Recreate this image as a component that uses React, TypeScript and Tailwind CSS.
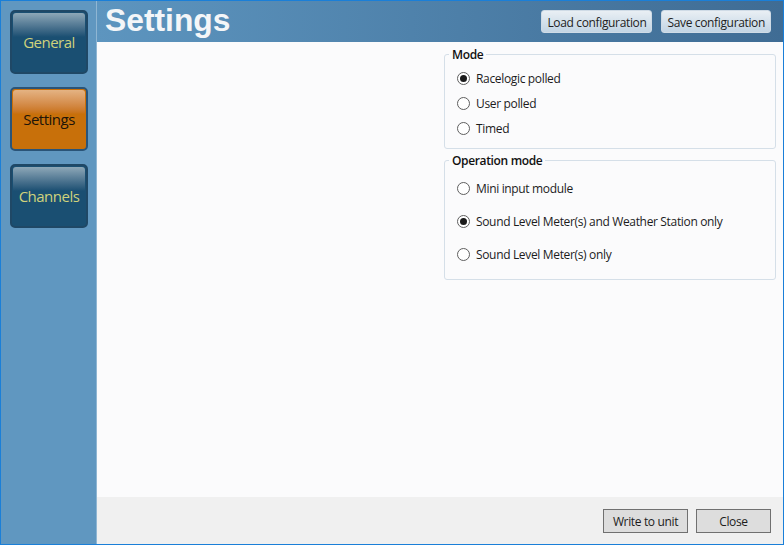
const font = "font-['Open_Sans','Noto_Sans',sans-serif]";

function NavButton({ label, active }: { label: string; active?: boolean }) {
  return (
    <div
      className={
        active
          ? "w-[78px] h-[64px] rounded-[5px] border-2 border-[#2a5478] bg-[#c8700a] p-px"
          : "w-[78px] h-[64px] rounded-[5px] border-2 border-[#1f4866] bg-[#1a4f72] p-px"
      }
    >
      <div className="relative h-full w-full">
        <div
          className={
            active
              ? "h-[24px] rounded-t-[3px] bg-gradient-to-b from-[#e4b383] to-[#c8700a]"
              : "h-[24px] rounded-t-[3px] bg-gradient-to-b from-[#8ea8b8] to-[#1a4f72]"
          }
        />
        <div
          className={
            active
              ? "absolute inset-0 flex items-center justify-center text-[15px] tracking-[-0.5px] text-[#1d1408]"
              : "absolute inset-0 flex items-center justify-center text-[15px] tracking-[-0.5px] text-[#cfd27c]"
          }
        >
          {label}
        </div>
      </div>
    </div>
  );
}

function Radio({ label, checked }: { label: string; checked?: boolean }) {
  return (
    <div className="flex items-center gap-[6px]">
      <div className="flex h-[13px] w-[13px] items-center justify-center rounded-full border border-[#5f5f5f] bg-white">
        {checked && <div className="h-[7px] w-[7px] rounded-full bg-[#1a1a1a]" />}
      </div>
      <span className="pt-px text-[12px] leading-[16px] tracking-[-0.34px] text-[#1c1c1c]">{label}</span>
    </div>
  );
}

function Group({ title, className, children }: { title: string; className: string; children: React.ReactNode }) {
  return (
    <div className={className}>
      <span className="absolute left-[4px] top-[-8px] bg-[#fbfbfc] px-[3px] text-[12px] leading-[16px] font-semibold tracking-[-0.35px] text-[#111]">
        {title}
      </span>
      {children}
    </div>
  );
}

function HeaderButton({ label }: { label: string }) {
  return (
    <div className="flex h-[23px] items-center justify-center rounded-[3px] border border-[#cfdbe6] bg-gradient-to-b from-[#e9eff4] to-[#c3d5e4] px-[5px] pt-[2px] text-[12px] tracking-[-0.35px] text-[#222]">
      {label}
    </div>
  );
}

function FooterButton({ label, className }: { label: string; className: string }) {
  return <div className={className}>{label}</div>;
}

export default function App() {
  return (
    <div className={"flex h-[545px] w-[784px] overflow-hidden border border-[#1a7fd8] " + font}>
      <div className="flex w-[96px] shrink-0 flex-col gap-[13px] border-r border-[#8fb6d3] bg-[#6097c0] pl-[9px] pt-[9px]">
        <NavButton label="General" />
        <NavButton label="Settings" active />
        <NavButton label="Channels" />
      </div>
      <div className="flex min-w-0 flex-1 flex-col">
        <div className="flex h-[41px] shrink-0 items-center justify-between bg-gradient-to-r from-[#5d95bf] to-[#3f6c94] pl-[8px] pr-[12px]">
          <span className="pb-[2px] text-[31.8px] leading-none font-bold text-[#f4f6f8] font-['Liberation_Sans',sans-serif]">Settings</span>
          <div className="flex gap-[9px]">
            <HeaderButton label="Load configuration" />
            <HeaderButton label="Save configuration" />
          </div>
        </div>
        <div className="flex flex-1 flex-col items-end bg-[#fbfbfc] pr-[7px] pt-[12px]">
          <Group title="Mode" className="relative flex h-[95px] w-[332px] flex-col gap-[8px] rounded-[3px] border border-[#d5dfe8] pl-[12px] pt-[15px]">
            <Radio label="Racelogic polled" checked />
            <Radio label="User polled" />
            <Radio label="Timed" />
          </Group>
          <Group title="Operation mode" className="relative mt-[11px] flex h-[120px] w-[332px] flex-col gap-[16px] rounded-[3px] border border-[#d5dfe8] pl-[12px] pt-[19px]">
            <Radio label="Mini input module" />
            <Radio label="Sound Level Meter(s) and Weather Station only" checked />
            <Radio label="Sound Level Meter(s) only" />
          </Group>
        </div>
        <div className="flex h-[47px] shrink-0 items-start justify-end gap-[8px] bg-[#f0f0f0] pr-[12px] pt-[12px]">
          <FooterButton label="Write to unit" className="flex h-[24px] w-[85px] items-center justify-center border border-[#707070] bg-[#dddddd] pt-[2px] text-[12px] tracking-[-0.35px] text-[#1c1c1c]" />
          <FooterButton label="Close" className="flex h-[24px] w-[75px] items-center justify-center border border-[#707070] bg-[#dddddd] pt-[2px] text-[12px] tracking-[-0.35px] text-[#1c1c1c]" />
        </div>
      </div>
    </div>
  );
}
